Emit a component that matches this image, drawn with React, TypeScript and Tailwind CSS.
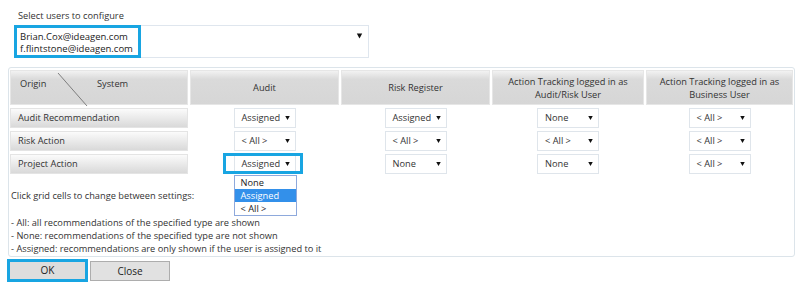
import { Fragment, useState } from "react";

const font = { fontFamily: '"Open Sans", "Noto Sans", sans-serif' };

type Choice = "None" | "Assigned" | "< All >";

const columns = [
  { key: "audit", label: ["Audit"] },
  { key: "risk", label: ["Risk Register"] },
  { key: "atAudit", label: ["Action Tracking logged in as", "Audit/Risk User"] },
  { key: "atBusiness", label: ["Action Tracking logged in as", "Business User"] },
];

const rows: { origin: string; values: Choice[] }[] = [
  { origin: "Audit Recommendation", values: ["Assigned", "Assigned", "None", "< All >"] },
  { origin: "Risk Action", values: ["< All >", "< All >", "< All >", "< All >"] },
  { origin: "Project Action", values: ["Assigned", "None", "None", "< All >"] },
];

const Arrow = ({ w = 6 }: { w?: number }) => (
  <svg width={w} height="6" viewBox="0 0 6 6" className="shrink-0">
    <path d="M0.3 0.5 H5.7 L3 5.5 Z" fill="#111" />
  </svg>
);

const CellSelect = ({ value, open }: { value: Choice; open?: boolean }) => (
  <div className="relative">
    <div className="flex h-[20px] w-[62px] items-center justify-between border border-[#dfe5eb] bg-white pl-[7px] pr-[5px] text-[9.25px] text-[#333]">
      <span>{value}</span>
      <Arrow w={5} />
    </div>
    {open && (
      <>
        <div className="pointer-events-none absolute -left-[11px] -top-[1px] h-[21px] w-[80px] border-[3px] border-[#18a5e2]" />
        <div className="absolute left-0 top-[21px] z-10 w-[63px] border border-[#8ea9dc] bg-white text-[9.25px] leading-[13px] text-[#222]">
          {(["None", "Assigned", "< All >"] as Choice[]).map((c) => (
            <div
              key={c}
              className={c === value ? "bg-[#3390ea] px-[6px] text-white" : "px-[6px]"}
            >
              {c}
            </div>
          ))}
        </div>
      </>
    )}
  </div>
);

export default function App() {
  const [openCell] = useState("2-0");

  return (
    <div className="h-[291px] w-[797px] bg-white text-[#333]" style={font}>
      <div className="px-[14px] pt-[9px]">
        <div className="pl-[4px] text-[9.25px] leading-[13px]">Select users to configure</div>
        <div className="mt-[3px] flex h-[33px] w-[355px] items-start justify-between border border-[#dfe6ee] bg-white">
          <div className="h-[33px] w-[127px] -ml-px -mt-px border-[3px] border-[#18a5e2] pl-[3px] pt-[3px] text-[9.5px] leading-[12px] text-[#222]">
            <div>Brian.Cox@ideagen.com</div>
            <div>f.flintstone@ideagen.com</div>
          </div>
          <div className="pr-[5px] pt-[7px]">
            <Arrow w={7} />
          </div>
        </div>
      </div>

      <div className="ml-[8px] mt-[9px] h-[190px] w-[787px] rounded-[3px] border border-[#dce4ea] px-[1px] pt-[2px]">
        <div className="grid grid-cols-[178px_149px_149px_152px_147px] gap-x-[2px] gap-y-[3px]">
          <div className="relative h-[35px] border border-[#e6e6e6] bg-gradient-to-b from-[#f2f2f2] via-[#dadada] via-[25%] to-[#d6d6d6] text-[9.25px]">
            <span className="absolute left-[9px] top-[6px]">Origin</span>
            <span className="absolute left-[86px] top-[6px]">System</span>
            <svg className="absolute left-0 top-0" width="178" height="35">
              <line x1="47" y1="2" x2="76" y2="35" stroke="#666" strokeWidth="0.8" />
            </svg>
          </div>
          {columns.map((c) => (
            <div
              key={c.key}
              className="flex h-[35px] flex-col items-center justify-center border border-[#e6e6e6] bg-gradient-to-b from-[#f2f2f2] via-[#dadada] via-[25%] to-[#d6d6d6] text-center text-[9.25px] leading-[13px]"
            >
              {c.label.map((l) => (
                <div key={l}>{l}</div>
              ))}
            </div>
          ))}

          {rows.map((r, ri) => (
            <Fragment key={r.origin}>
              <div className="flex h-[20px] items-center border border-[#e4e4e4] bg-gradient-to-b from-[#fbfbfb] to-[#d9d9d9] pl-[7px] text-[9.25px]">
                {r.origin}
              </div>
              {r.values.map((v, ci) => (
                <div key={r.origin + ci} className="flex h-[20px] justify-center">
                  <CellSelect value={v} open={openCell === `${ri}-${ci}`} />
                </div>
              ))}
            </Fragment>
          ))}
        </div>

        <div className="mt-[15px] pl-[1px] text-[9.25px] leading-[13px]">
          <div>Click grid cells to change between settings:</div>
          <div className="mt-[14px]">- All: all recommendations of the specified type are shown</div>
          <div>- None: recommendations of the specified type are not shown</div>
          <div>- Assigned: recommendations are only shown if the user is assigned to it</div>
        </div>
      </div>

      <div className="ml-[7px] mt-[2px] flex items-start gap-[2px] text-[10px] text-[#222]">
        <button className="h-[23px] w-[81px] border-[3px] border-[#18a5e2] bg-[#dddddd]">OK</button>
        <button className="mt-[2px] h-[20px] w-[80px] border border-[#adadad] bg-[#e1e1e1]">Close</button>
      </div>
    </div>
  );
}
